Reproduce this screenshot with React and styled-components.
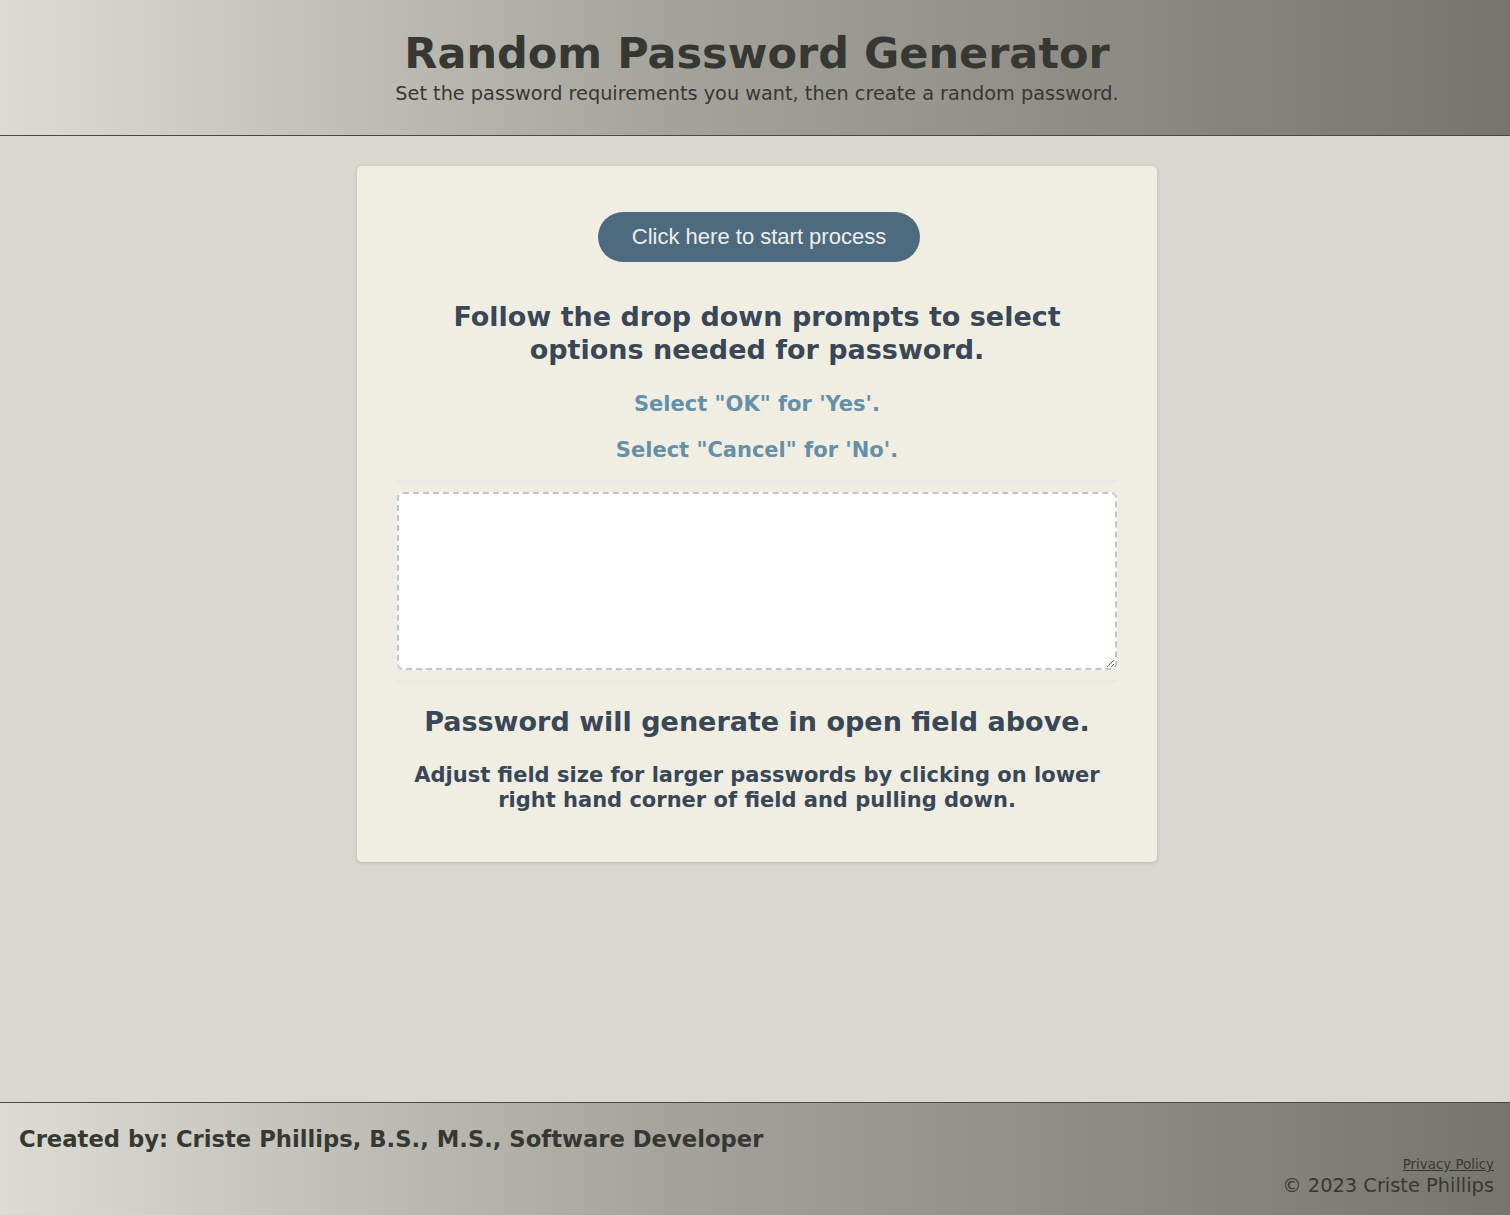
import React from "react";
import styled, { createGlobalStyle } from "styled-components";

const GlobalStyle = createGlobalStyle`
  * { box-sizing: border-box; }
  html, body { margin: 0; padding: 0; }
  body {
    font-family: "DejaVu Sans", Verdana, sans-serif;
    background-color: #d8d8d0;
  }
`;

export default function App() {
  return (
    <>
      <GlobalStyle />
      <Page>
        <Header>
          <Title>Random Password Generator</Title>
          <Subtitle>
            Set the password requirements you want, then create a random password.
          </Subtitle>
        </Header>
        <Main>
          <Card>
            <StartButton type="button">Click here to start process</StartButton>
            <Prompt>
              Follow the drop down prompts to select options needed for password.
            </Prompt>
            <Hint>Select "OK" for 'Yes'.</Hint>
            <Hint>Select "Cancel" for 'No'.</Hint>
            <FieldWrap>
              <PasswordField readOnly aria-label="Generated Password" />
            </FieldWrap>
            <Note>Password will generate in open field above.</Note>
            <SmallNote>
              Adjust field size for larger passwords by clicking on lower right
              hand corner of field and pulling down.
            </SmallNote>
          </Card>
        </Main>
        <Footer>
          <Credit>Created by: Criste Phillips, B.S., M.S., Software Developer</Credit>
          <FooterRight>
            <PolicyLink href="#">Privacy Policy</PolicyLink>
            <Copyright>© 2023 Criste Phillips</Copyright>
          </FooterRight>
        </Footer>
      </Page>
    </>
  );
}

const Page = styled.div`
  min-height: 100vh;
  display: flex;
  flex-direction: column;
`;

const Header = styled.header`
  height: 136px;
  background: linear-gradient(to right, #dcdcd4 0%, #a4a39b 45%, #76766e 100%);
  border-bottom: 1px solid #4a4a44;
  display: flex;
  flex-direction: column;
  align-items: center;
  padding: 27px 0 0 4px;
  color: #383833;
`;

const Title = styled.h1`
  margin: 0;
  font-size: 43px;
  font-weight: bold;
  line-height: 52px;
`;

const Subtitle = styled.p`
  margin: 0;
  font-size: 19.3px;
  line-height: 30px;
`;

const Main = styled.main`
  flex: 1;
  display: flex;
  justify-content: center;
  align-items: flex-start;
  padding: 30px 0 0 4px;
`;

const Card = styled.section`
  width: 800px;
  background-color: #f0eee2;
  border-radius: 5px;
  box-shadow: 0 1px 4px rgba(0, 0, 0, 0.15);
  padding: 46px 40px 49px;
  display: flex;
  flex-direction: column;
  align-items: center;
  text-align: center;
`;

const StartButton = styled.button`
  width: 322px;
  height: 50px;
  margin-left: 4px;
  border: none;
  border-radius: 25px;
  background-color: #4d6a7e;
  color: #eeeeee;
  font-family: "Liberation Sans", Arial, sans-serif;
  font-size: 22px;
  cursor: pointer;
`;

const Prompt = styled.h2`
  margin: 38px 0 18px;
  max-width: 640px;
  font-size: 27px;
  line-height: 33px;
  color: #3a4756;
`;

const Hint = styled.h4`
  margin: 6px 0 11px;
  font-size: 21px;
  line-height: 29px;
  color: #6690a8;
`;

const FieldWrap = styled.div`
  width: 100%;
  margin-top: 4px;
  padding: 10px 0;
  border-top: 2px solid #e8e8e4;
  border-bottom: 2px solid #e8e8e4;
  display: flex;
`;

const PasswordField = styled.textarea`
  width: 100%;
  height: 178px;
  border: 2px dashed #c0c4cc;
  border-radius: 6px;
  background: #ffffff;
  resize: vertical;
  display: block;
`;

const Note = styled.h2`
  margin: 22px 0 23px;
  font-size: 27px;
  line-height: 36px;
  color: #3a4756;
`;

const SmallNote = styled.h4`
  margin: 0;
  font-size: 21px;
  line-height: 25px;
  color: #3a4756;
`;

const Footer = styled.footer`
  height: 113px;
  background: linear-gradient(to right, #dcdcd4 0%, #a4a39b 45%, #76766e 100%);
  border-top: 1px solid #4a4a44;
  display: flex;
  justify-content: space-between;
  padding: 21px 16px 0 19px;
  color: #383833;
`;

const Credit = styled.p`
  margin: 0;
  font-size: 22.7px;
  font-weight: bold;
  line-height: 30px;
`;

const FooterRight = styled.div`
  display: flex;
  flex-direction: column;
  align-items: flex-end;
  padding-top: 33px;
`;

const PolicyLink = styled.a`
  color: #383833;
  font-size: 13.4px;
  line-height: 16px;
  text-decoration: underline;
`;

const Copyright = styled.p`
  margin: 0;
  font-size: 19.4px;
  line-height: 26px;
`;
